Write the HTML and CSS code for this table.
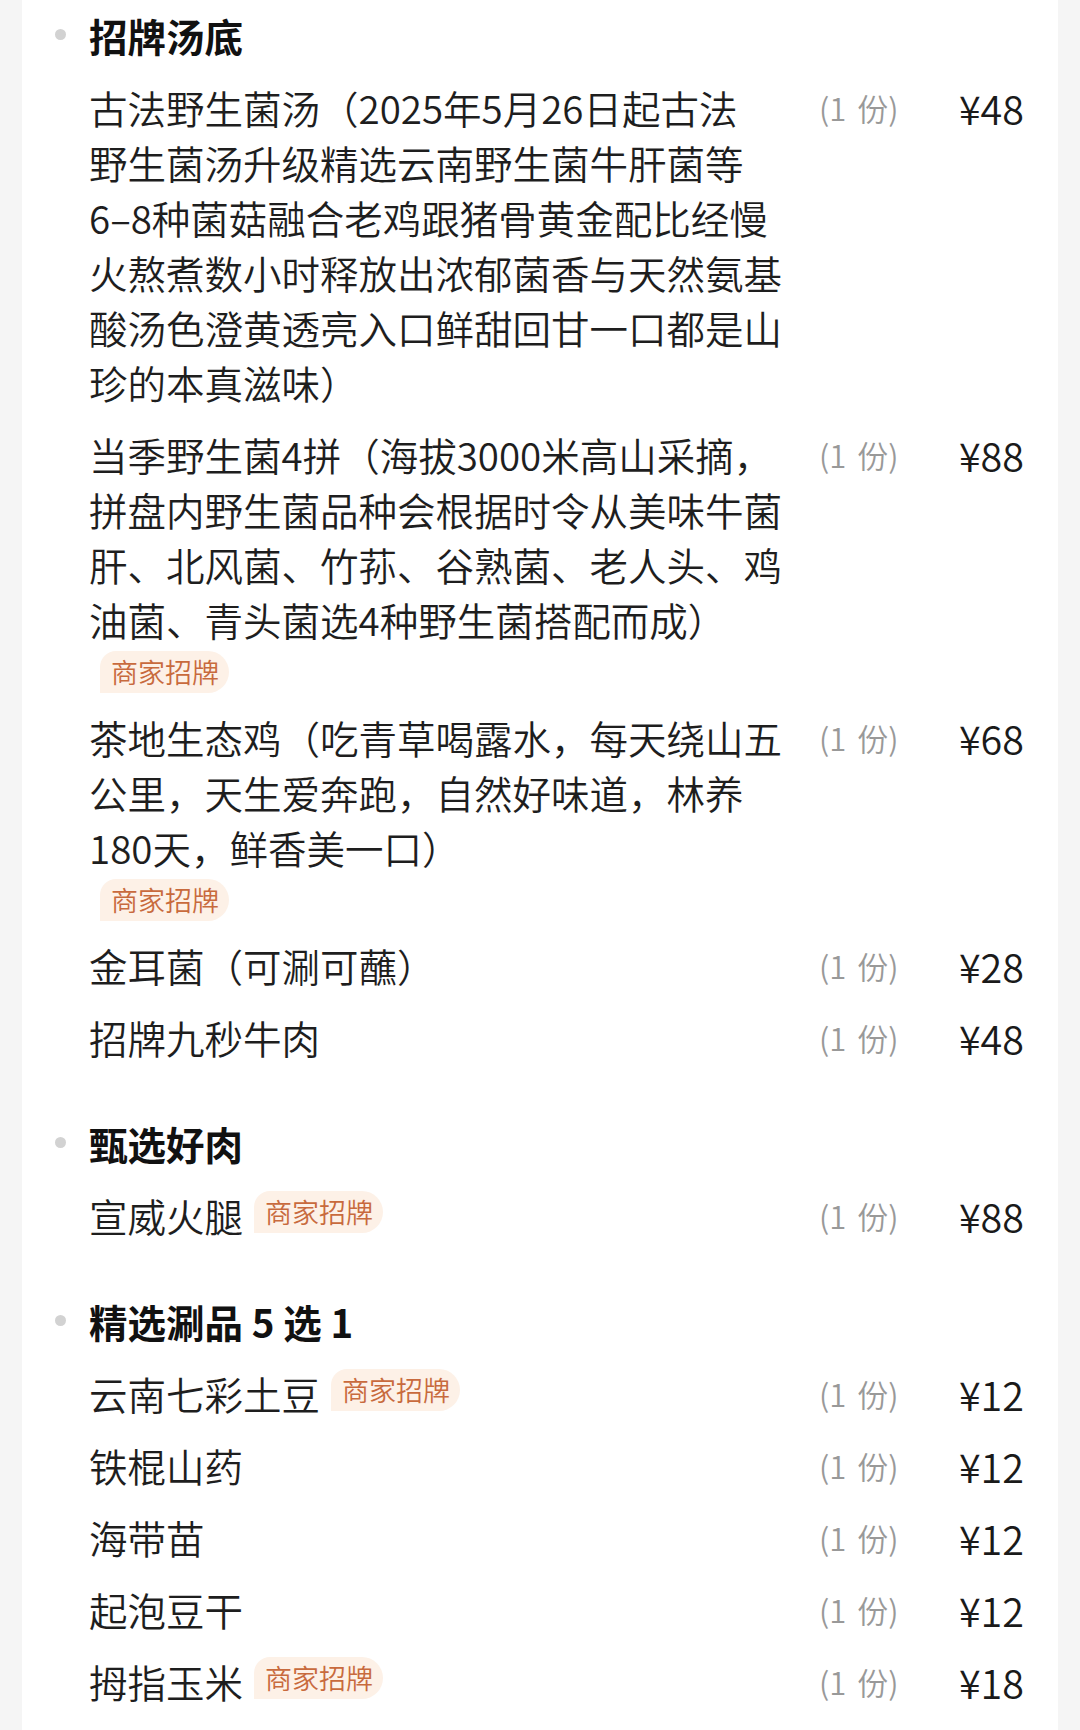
FILE: index.html
```html
<!DOCTYPE html>
<html lang="zh-CN">
<head>
<meta charset="utf-8">
<title>套餐内容</title>
<link rel="stylesheet" href="styles.css">
</head>
<body>
<main class="card">
  <section class="section">
    <h2 class="section-title"><span class="dot"></span>招牌汤底</h2>
    <div class="items">
      <div class="row">
        <div class="name">古法野生菌汤（2025年5月26日起古法<br>野生菌汤升级精选云南野生菌牛肝菌等<br>6–8种菌菇融合老鸡跟猪骨黄金配比经慢<br>火熬煮数小时释放出浓郁菌香与天然氨基<br>酸汤色澄黄透亮入口鲜甜回甘一口都是山<br>珍的本真滋味）</div>
        <div class="qty">(1 份)</div>
        <div class="price">¥48</div>
      </div>
      <div class="row">
        <div class="name name-stack">
          <div>当季野生菌4拼（海拔3000米高山采摘，<br>拼盘内野生菌品种会根据时令从美味牛菌<br>肝、北风菌、竹荪、谷熟菌、老人头、鸡<br>油菌、青头菌选4种野生菌搭配而成）</div>
          <span class="tag">商家招牌</span>
        </div>
        <div class="qty">(1 份)</div>
        <div class="price">¥88</div>
      </div>
      <div class="row">
        <div class="name name-stack">
          <div>茶地生态鸡（吃青草喝露水，每天绕山五<br>公里，天生爱奔跑，自然好味道，林养<br>180天，鲜香美一口）</div>
          <span class="tag">商家招牌</span>
        </div>
        <div class="qty">(1 份)</div>
        <div class="price">¥68</div>
      </div>
      <div class="row">
        <div class="name">金耳菌（可涮可蘸）</div>
        <div class="qty">(1 份)</div>
        <div class="price">¥28</div>
      </div>
      <div class="row">
        <div class="name">招牌九秒牛肉</div>
        <div class="qty">(1 份)</div>
        <div class="price">¥48</div>
      </div>
    </div>
  </section>

  <section class="section">
    <h2 class="section-title"><span class="dot"></span>甄选好肉</h2>
    <div class="items">
      <div class="row">
        <div class="name name-inline"><span>宣威火腿</span><span class="tag">商家招牌</span></div>
        <div class="qty">(1 份)</div>
        <div class="price">¥88</div>
      </div>
    </div>
  </section>

  <section class="section">
    <h2 class="section-title"><span class="dot"></span>精选涮品 5 选 1</h2>
    <div class="items">
      <div class="row">
        <div class="name name-inline"><span>云南七彩土豆</span><span class="tag">商家招牌</span></div>
        <div class="qty">(1 份)</div>
        <div class="price">¥12</div>
      </div>
      <div class="row">
        <div class="name">铁棍山药</div>
        <div class="qty">(1 份)</div>
        <div class="price">¥12</div>
      </div>
      <div class="row">
        <div class="name">海带苗</div>
        <div class="qty">(1 份)</div>
        <div class="price">¥12</div>
      </div>
      <div class="row">
        <div class="name">起泡豆干</div>
        <div class="qty">(1 份)</div>
        <div class="price">¥12</div>
      </div>
      <div class="row">
        <div class="name name-inline"><span>拇指玉米</span><span class="tag">商家招牌</span></div>
        <div class="qty">(1 份)</div>
        <div class="price">¥18</div>
      </div>
    </div>
  </section>
</main>
</body>
</html>
```

FILE: styles.css
```css
html, body {
  margin: 0;
  padding: 0;
}

body {
  background: #f5f5f5;
  font-family: "Noto Sans CJK SC", "Noto Sans", sans-serif;
  color: #1e1e1e;
}

.card {
  box-sizing: border-box;
  margin: 0 22px;
  min-height: 1730px;
  background: #ffffff;
  padding: 8px 34px 40px 67px;
}

.section + .section {
  margin-top: 51px;
}

.section-title {
  display: flex;
  align-items: center;
  gap: 23px;
  margin: 0 0 0 -34px;
  height: 55px;
  line-height: 55px;
  font-size: 38.5px;
  font-weight: 700;
  color: #111111;
}

.dot {
  flex: none;
  width: 11px;
  height: 11px;
  border-radius: 50%;
  background: #d2d2d2;
  margin-top: -2px;
}

.items {
  display: flex;
  flex-direction: column;
  gap: 17px;
  margin-top: 17px;
}

.row {
  display: flex;
  align-items: flex-start;
  font-size: 38.5px;
  line-height: 55px;
  font-weight: 350;
}

.name {
  flex: 1;
  min-width: 0;
}

.name-stack {
  display: flex;
  flex-direction: column;
  align-items: flex-start;
}

.name-inline {
  display: flex;
  align-items: center;
}

.qty {
  flex: none;
  width: 92px;
  margin-left: 30px;
  font-size: 31px;
  word-spacing: 4px;
  color: #999999;
  white-space: nowrap;
}

.price {
  flex: none;
  width: 113px;
  text-align: right;
  font-size: 39.5px;
  color: #1a1a1a;
}

.tag {
  display: inline-block;
  height: 42px;
  line-height: 42px;
  padding: 0 10px 0 11px;
  font-size: 27px;
  color: #c86a3d;
  background: #fdf1e7;
  border-radius: 16px 21px 21px 0;
  white-space: nowrap;
}

.name-stack .tag {
  margin: 4px 0 0 11px;
}

.name-inline .tag {
  margin: 0 0 8px 11px;
}
```
